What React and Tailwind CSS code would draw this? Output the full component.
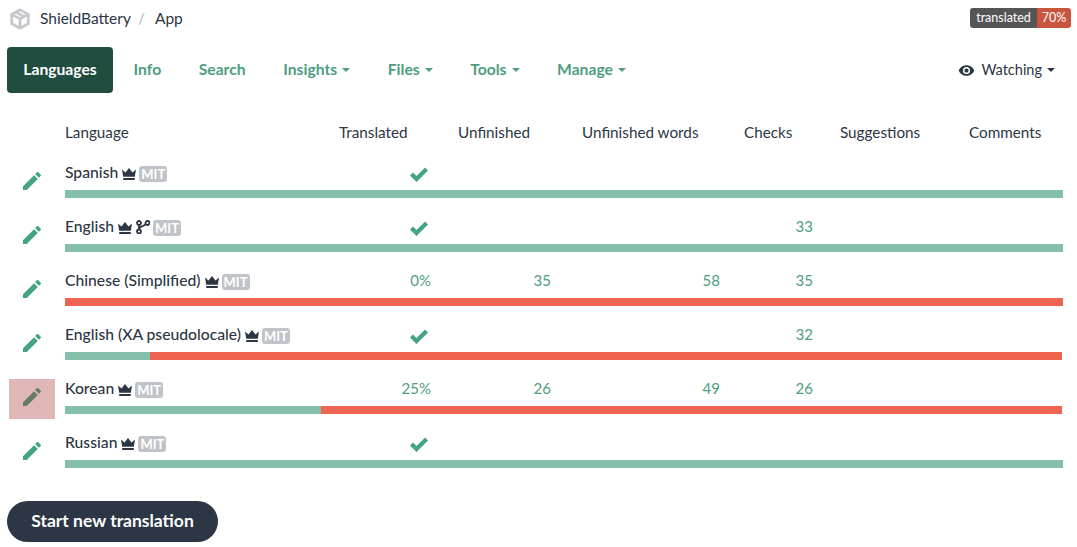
import React from "react";

const FONT = { fontFamily: '"Lato", "Noto Sans", sans-serif' };

const navItems = [
  { label: "Info" },
  { label: "Search" },
  { label: "Insights", caret: true },
  { label: "Files", caret: true },
  { label: "Tools", caret: true },
  { label: "Manage", caret: true },
];

const rows = [
  { name: "Spanish", done: true, pct: 100 },
  { name: "English", done: true, fork: true, checks: 33, pct: 100 },
  { name: "Chinese (Simplified)", translated: "0%", unfinished: 35, words: 58, checks: 35, pct: 0 },
  { name: "English (XA pseudolocale)", done: true, checks: 32, pct: 8.5, short: true },
  { name: "Korean", translated: "25%", unfinished: 26, words: 49, checks: 26, pct: 25.7, hover: true, short: true },
  { name: "Russian", done: true, pct: 100 },
];

function Caret({ color }) {
  return <span className={`ml-[5px] inline-block border-x-4 border-t-4 border-x-transparent align-middle ${color}`} />;
}

function Crown() {
  return (
    <svg viewBox="0 0 14 12" className="w-[14px] h-[12px] mt-[1px] ml-[4px] mr-[3px] fill-[#2c3644] shrink-0">
      <path d="M0 1.5l3.5 3L7 0l3.5 4.5L14 1.5l-1.2 7.2H1.2z" />
      <rect x="1.2" y="10" width="11.6" height="2" />
    </svg>
  );
}

function ForkIcon() {
  return (
    <svg viewBox="0 0 14 14" className="w-[14px] h-[14px] ml-[1px] mr-[3px] fill-none stroke-[#2c3644] stroke-[1.8] shrink-0">
      <circle cx="3" cy="3" r="2" />
      <circle cx="3" cy="11.5" r="2" />
      <circle cx="11.5" cy="3" r="2" />
      <path d="M3 5v4.5M9.5 4c-1 2.5-4.5 1.5-6 4" />
    </svg>
  );
}

function Row({ row }) {
  return (
    <div className="flex h-[54px]">
      <div className="w-[65px] shrink-0 pl-[9px]">
        <div className={`w-[46px] h-[40px] mt-[8px] pb-[4px] flex items-center justify-center ${row.hover ? "bg-[#e0b7b7]" : ""}`}>
          <svg viewBox="0 0 24 24" className={`w-[24px] h-[24px] ${row.hover ? "fill-[#667a66]" : "fill-[#42a482]"}`}>
            <path d="M3 17.25V21h3.75L17.81 9.94l-3.75-3.75L3 17.25zM20.71 7.04a1 1 0 0 0 0-1.41l-2.34-2.34a1 1 0 0 0-1.41 0l-1.83 1.83 3.75 3.75 1.83-1.83z" />
          </svg>
        </div>
      </div>
      <div className="w-[998px] shrink-0">
        <div className="h-[35px] relative">
          <div className="flex items-center h-[34px] pt-[2px] text-[15.7px] font-medium text-[#2c3644]">
            <span>{row.name}</span>
            <Crown />
            {row.fork && <ForkIcon />}
            <span className="mt-[1px] bg-[#c0c3ca] text-white text-[13px] font-bold rounded-[3px] w-[28px] text-center h-[16px] leading-[16px]">MIT</span>
          </div>
          <div className="absolute top-0 left-0 right-0 h-[34px] text-[15px] text-[#4f9d80]">
            {row.done && (
              <svg viewBox="0 0 18 15" className="absolute left-[345px] top-[12px] w-[18px] h-[15px] fill-[#42a482]">
                <path d="M0 8.5l3-3L6.5 9 15 .5l3 3L6.5 15z" />
              </svg>
            )}
            {row.translated && <span className="absolute right-[632px] top-[6px]">{row.translated}</span>}
            {row.unfinished && <span className="absolute right-[512px] top-[6px]">{row.unfinished}</span>}
            {row.words && <span className="absolute right-[343px] top-[6px]">{row.words}</span>}
            {row.checks && <span className="absolute right-[250px] top-[6px]">{row.checks}</span>}
          </div>
        </div>
        <div className={`h-[8px] flex bg-[#ef6351] ${row.short ? "mr-[1px]" : ""}`}>
          <div className="h-full bg-[#84bfac]" style={{ width: `${row.pct}%` }} />
        </div>
      </div>
    </div>
  );
}

export default function App() {
  return (
    <div style={FONT} className="w-[1077px] h-[547px] overflow-hidden bg-white text-[#2c3644]">
      <div className="flex items-center justify-between h-[38px] pl-[9px] pr-[6px]">
        <div className="flex items-center text-[15.5px]">
          <svg viewBox="0 0 24 24" className="w-[22px] h-[22px] mr-[9px] fill-none stroke-[#c6c8cc] stroke-[3]">
            <path d="M12 2l9 5v10l-9 5-9-5V7z" />
            <path d="M3 7l9 5 9-5M12 12v10M7.5 4.5l9 5" />
          </svg>
          <span>ShieldBattery</span>
          <span className="ml-[7px] mr-[10px] text-[#b5b9bf]">/</span>
          <span>App</span>
        </div>
        <div className="flex h-[20px] -mt-[2px] text-[12.5px] leading-[20px] text-white rounded-[3px] overflow-hidden">
          <span className="bg-[#555555] w-[67px] text-center">translated</span>
          <span className="bg-[#c9553f] w-[34px] text-center">70%</span>
        </div>
      </div>

      <div className="flex items-center h-[46px] mt-[9px] pl-[7px] pr-[22px] text-[15.7px]">
        <div className="h-[46px] w-[106px] flex items-center justify-center bg-[#204d3f] text-white font-bold rounded-[4px]">Languages</div>
        <div className="flex items-center flex-1 gap-[37.5px] pl-[20.5px] font-bold text-[#4f9d80]">
          {navItems.map((item) => (
            <span key={item.label} className="flex items-center">
              {item.label}
              {item.caret && <Caret color="border-t-[#4f9d80]" />}
            </span>
          ))}
        </div>
        <div className="flex items-center text-[14.5px]">
          <svg viewBox="0 0 24 24" className="w-[17px] h-[17px] mr-[6px] fill-[#2c3644]">
            <path d="M12 4.5C7 4.5 2.7 7.6 1 12c1.7 4.4 6 7.5 11 7.5s9.3-3.1 11-7.5c-1.7-4.4-6-7.5-11-7.5zM12 17a5 5 0 1 1 0-10 5 5 0 0 1 0 10zm0-8a3 3 0 1 0 0 6 3 3 0 0 0 0-6z" />
          </svg>
          <span>Watching</span>
          <Caret color="border-t-[#2c3644]" />
        </div>
      </div>

      <div className="relative h-[54px] text-[15.25px]">
        <span className="absolute left-[65px] top-[28px]">Language</span>
        <span className="absolute left-[339px] top-[28px]">Translated</span>
        <span className="absolute left-[458px] top-[28px]">Unfinished</span>
        <span className="absolute left-[582px] top-[28px]">Unfinished words</span>
        <span className="absolute left-[744px] top-[28px]">Checks</span>
        <span className="absolute left-[840px] top-[28px]">Suggestions</span>
        <span className="absolute left-[969px] top-[28px]">Comments</span>
      </div>

      <div className="pt-[8px]">
        {rows.map((row) => (
          <Row key={row.name} row={row} />
        ))}
      </div>

      <div className="pl-[7px] mt-[22px]">
        <button className="h-[41px] w-[211px] rounded-full bg-[#2c3644] text-white text-[17.5px] font-bold">Start new translation</button>
      </div>
    </div>
  );
}
